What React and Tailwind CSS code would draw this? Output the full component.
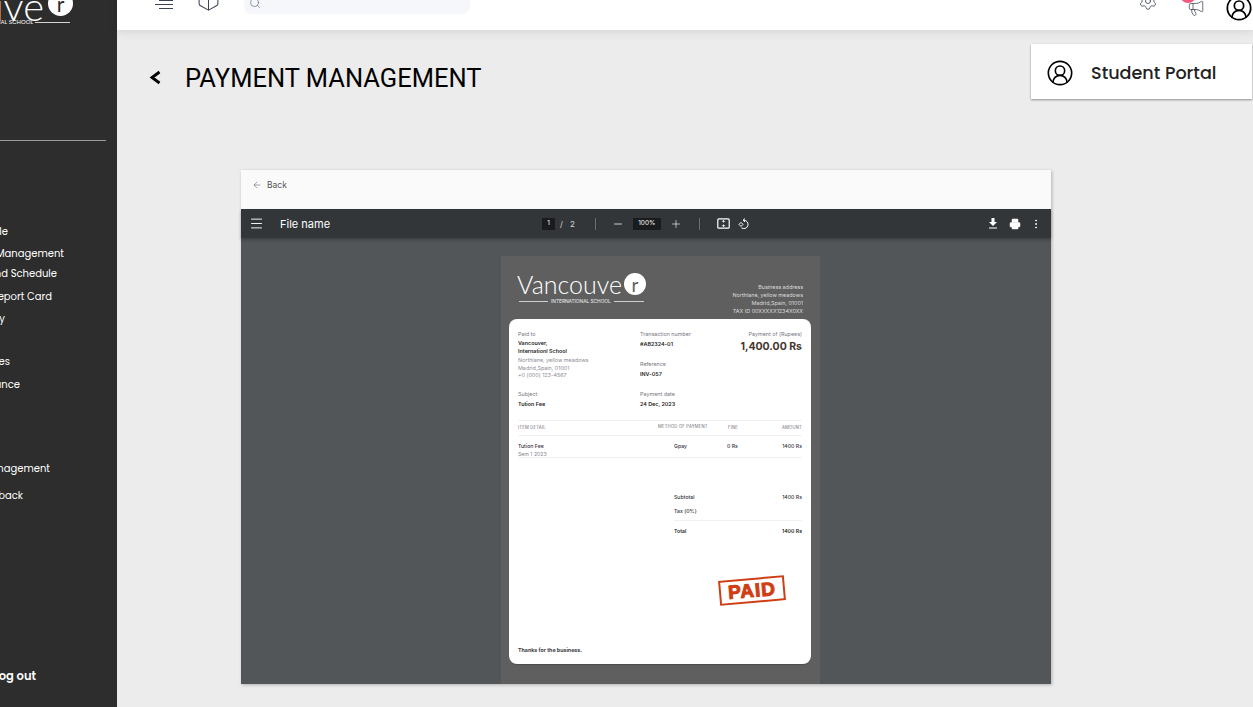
import React from 'react';
import { ArrowLeft, Box, CircleUserRound, Megaphone, Menu, Minus, MoreVertical, Plus, Printer, Search, Settings } from 'lucide-react';

const navItems = [
  { label: 'Profile', cls: 'w-[8px] mt-[83px]' },
  { label: 'Fee Management', cls: 'w-[64px] mt-[7px]' },
  { label: 'Time Table and Schedule', cls: 'w-[57px] mt-[5px]' },
  { label: 'Report Card', cls: 'w-[52px] mt-[8px]' },
  { label: 'Library', cls: 'w-[5px] mt-[7px]' },
  { label: 'Notices', cls: 'w-[10px] mt-[28px]' },
  { label: 'Attendance', cls: 'w-[20px] mt-[8px]' },
  { label: 'Management', cls: 'w-[50px] mt-[69px]' },
  { label: 'Feedback', cls: 'w-[23px] mt-[12px]' },
];

const Logo = () => (
  <div className="w-[130px]">
    <div className="flex items-center h-[24px]">
      <span className="font-['Lato'] font-light text-[25px] leading-none text-white">Vancouve</span>
      <span className="w-[22px] h-[22px] rounded-full bg-white flex items-center justify-center font-['Lato'] text-[19px] leading-none text-[#5f5f5f] ml-[2px]">r</span>
    </div>
    <div className="flex items-center gap-[3px] mt-[3px] pl-[2px]">
      <div className="h-px w-[29px] bg-white/70"></div>
      <span className="text-[4.8px] leading-none text-white/90 whitespace-nowrap">INTERNATIONAL SCHOOL</span>
      <div className="h-px w-[30px] bg-white/70"></div>
    </div>
  </div>
);

const Sidebar = () => (
  <aside className="w-[117px] h-[707px] shrink-0 bg-[#2d2d2d] overflow-hidden flex flex-col font-['Poppins','Open_Sans',sans-serif] text-white">
    <div className="h-[24px] flex justify-end items-start w-[73px] -mt-[7px] whitespace-nowrap">
      <span className="font-['Lato'] font-light text-[40px] leading-[26px] text-white">Vancouve</span>
      <span className="shrink-0 w-[25px] h-[25px] rounded-full bg-white flex items-center justify-center font-['Lato'] text-[21px] leading-none text-[#2d2d2d] mt-[-2px] ml-[4px]">r</span>
    </div>
    <div className="flex justify-end items-center w-[70px] gap-[2px] whitespace-nowrap mt-[2px] h-[6px]">
      <span className="text-[6px] leading-none">INTERNATIONAL SCHOOL</span>
      <div className="h-px w-[35px] shrink-0 bg-white/80"></div>
    </div>
    <div className="h-px w-[106px] bg-[#9a9a9a] mt-[115px]"></div>
    {navItems.map((item) => (
      <div key={item.label} className={`${item.cls} h-[15px] flex justify-end items-center whitespace-nowrap text-[10px] font-normal`}>
        {item.label}
      </div>
    ))}
    <div className="w-[36px] mt-[165px] flex justify-end whitespace-nowrap text-[11.5px] leading-[16px] font-semibold">Log out</div>
  </aside>
);

const TopBar = () => (
  <header className="h-[30px] shrink-0 bg-white overflow-hidden flex items-start pl-[38px] relative z-10 shadow-[0_2px_10px_rgba(0,0,0,0.1)]">
    <svg width="20" height="10" viewBox="0 0 20 10" className="text-[#3b4252]" fill="none" stroke="currentColor" strokeWidth="1">
      <path d="M4 0.5h14M0 4.5h18M4 8.5h14" />
    </svg>
    <Box size={25} strokeWidth={1} className="ml-[21px] -mt-[13px] text-[#3b4252]" />
    <div className="ml-[23px] w-[226px] h-[14px] bg-[#f5f7fa] rounded-b-[8px] pl-[5px]">
      <Search size={12} strokeWidth={1.25} className="-mt-[3px] text-[#5b6577]" />
    </div>
    <div className="flex-1"></div>
    <Settings size={20} strokeWidth={1} className="-mt-[9px] text-[#3b4252]" />
    <div className="relative ml-[29px] w-[18px] h-[14px]">
      <div className="absolute -left-[7px] -top-[13px] w-[16px] h-[16px] rounded-full bg-[#f4587e]"></div>
      <Megaphone size={18} strokeWidth={1} className="-mt-[1px] text-[#3b4252]" />
    </div>
    <CircleUserRound size={28} strokeWidth={1.5} className="ml-[20px] -mt-[6px] text-black" />
  </header>
);

const PdfToolbar = () => (
  <div className="h-[29px] bg-[#323639] flex items-center text-white relative z-10 shadow-[0_2px_3px_rgba(0,0,0,0.25)]">
    <Menu size={15} strokeWidth={1.5} className="ml-[8px]" />
    <span className="ml-[16px] w-[262px] text-[11px] font-['Inter'] pt-[1px]">File name</span>
    <span className="w-[13px] h-[12px] bg-[#191b1c] flex items-center justify-center text-[6.5px] font-['Inter']">1</span>
    <span className="ml-[5px] text-[8px] text-[#d5d5d5] font-['Inter']">/</span>
    <span className="ml-[7px] text-[8px] text-[#d5d5d5] font-['Inter']">2</span>
    <div className="ml-[20px] w-px h-[12px] bg-[#6a6e71]"></div>
    <Minus size={12} strokeWidth={1.5} className="ml-[16px]" />
    <span className="ml-[9px] w-[28px] h-[12px] bg-[#191b1c] flex items-center justify-center text-[6.5px] font-['Inter']">100%</span>
    <Plus size={12} strokeWidth={1.25} className="ml-[9px]" />
    <div className="ml-[17px] w-px h-[12px] bg-[#6a6e71]"></div>
    <svg width="13" height="11" viewBox="0 0 13 11" className="ml-[17px]" fill="none" stroke="currentColor" strokeWidth="1.2">
      <rect x="0.8" y="0.8" width="11.4" height="9.4" rx="1" />
      <path d="M6.5 2.5v2M6.5 6.5v2M5 3.8l1.5-1.5L8 3.8M5 7.2l1.5 1.5L8 7.2" strokeWidth="0.9" />
    </svg>
    <svg width="12" height="12" viewBox="0 0 12 12" className="ml-[8px]" fill="none" stroke="currentColor" strokeWidth="1">
      <path d="M6 2.2a4.2 4.2 0 1 1-2.6 7.6" />
      <path d="M7 0.6 5 2.2 7 3.9" />
      <path d="M3 4.4 5 6.4 3 8.4 1 6.4z" />
    </svg>
    <div className="flex-1"></div>
    <svg width="10" height="11" viewBox="0 0 10 11" fill="currentColor">
      <path d="M3.5 0h3v4h2.5L5 8 1 4h2.5zM1 9.5h8v1H1z" />
    </svg>
    <Printer size={12} fill="currentColor" strokeWidth={1} className="ml-[11px] text-white" />
    <MoreVertical size={12} strokeWidth={2} className="ml-[9px] mr-[9px]" />
  </div>
);

const Invoice = () => (
  <div className="ml-[260px] mt-[18px] w-[319px] h-[428px] bg-[#5f5f5f] flex flex-col px-[8px] font-['Inter']">
    <div className="flex justify-between h-[63px] pl-[8px] pr-[9px]">
      <div className="pt-[16px]"><Logo /></div>
      <div className="pt-[27px] text-right text-[5.4px] leading-[8px] text-[#dcdcdc]">
        <div>Business address</div>
        <div>Northlane, yellow meadows</div>
        <div>Madrid,Spain, 01001</div>
        <div>TAX ID 00XXXXX1234X0XX</div>
      </div>
    </div>
    <div className="w-[302px] h-[345px] bg-white rounded-[8px] px-[9px] pt-[11px] flex flex-col shadow-[0_1px_1px_rgba(0,0,0,0.2)]">
      <div className="flex h-[90px]">
        <div className="w-[122px] text-[5.4px] text-[#77777f]">
          <div className="leading-[8px]">Paid to</div>
          <div className="mt-[2px] font-semibold leading-[7.5px] text-[#1f1f24]">Vancouver,<br />Internationl School</div>
          <div className="mt-[2px] leading-[7.7px] text-[#8c8c94]">Northlane, yellow meadows<br />Madrid,Spain, 01001<br />+0 (000) 123-4567</div>
          <div className="mt-[10px] leading-[8px]">Subject</div>
          <div className="mt-[2px] font-semibold leading-[8px] text-[#1f1f24]">Tution Fee</div>
        </div>
        <div className="w-[70px] text-[5.4px] text-[#77777f]">
          <div className="leading-[8px]">Transaction number</div>
          <div className="mt-[2px] font-semibold leading-[8px] text-[#1f1f24]">#AB2324-01</div>
          <div className="mt-[12px] leading-[8px]">Reference</div>
          <div className="mt-[2px] font-semibold leading-[8px] text-[#1f1f24]">INV-057</div>
          <div className="mt-[12px] leading-[8px]">Payment date</div>
          <div className="mt-[2px] font-semibold leading-[8px] text-[#1f1f24]">24 Dec, 2023</div>
        </div>
        <div className="flex-1 text-right">
          <div className="text-[5.4px] leading-[8px] text-[#77777f]">Payment of (Rupees)</div>
          <div className="mt-[2px] text-[10.5px] leading-[14px] font-bold text-[#45352c] whitespace-nowrap">1,400.00 Rs</div>
        </div>
      </div>
      <div className="border-y border-[#eef0f2] h-[16px] flex items-center text-[4.2px] tracking-[0.2px] text-[#6f6f78]">
        <span className="w-[140px]">ITEM DETAIL</span>
        <span className="w-[70px] -mt-[2px]">METHOD OF PAYMENT</span>
        <span className="w-[40px]">FINE</span>
        <span className="flex-1 text-right">AMOUNT</span>
      </div>
      <div className="border-b border-[#eef0f2] h-[22px] pt-[6px] flex text-[5.2px] font-medium leading-[8px] text-[#33333a]">
        <div className="w-[156px]">
          Tution Fee
          <div className="font-normal text-[#85858d] leading-[9px]">Sem 1 2023</div>
        </div>
        <span className="w-[53px]">Gpay</span>
        <span className="w-[30px]">0 Rs</span>
        <span className="flex-1 text-right">1400 Rs</span>
      </div>
      <div className="ml-[156px] mt-[35px] text-[5.2px] leading-[8px] font-medium text-[#33333a]">
        <div className="flex justify-between"><span>Subtotal</span><span>1400 Rs</span></div>
        <div className="mt-[6px] pb-[5px] border-b border-[#eef0f2]">Tax (0%)</div>
        <div className="mt-[6px] flex justify-between font-semibold text-[#1f1f24]"><span>Total</span><span>1400 Rs</span></div>
      </div>
      <div className="self-end mt-[43px] mr-[17px] -rotate-[5deg] border-[2.5px] border-[#cf3d12] w-[66px] h-[25px] flex items-center justify-center font-['Liberation_Sans'] font-black text-[19px] leading-none tracking-[1px] text-[#cf3d12] [-webkit-text-stroke:1px_#cf3d12]">PAID</div>
      <div className="mt-[43px] text-[5.3px] leading-[8px] font-bold text-[#3c3c44]">Thanks for the business.</div>
    </div>
  </div>
);

export default function App() {
  return (
    <div className="w-[1253px] h-[707px] overflow-hidden flex bg-[#ececec]">
      <Sidebar />
      <main className="flex-1 flex flex-col min-w-0">
        <TopBar />
        <div className="flex justify-between pr-px mt-[14px] h-[55px]">
          <div className="flex items-center pl-[32px] pt-[12px] text-black">
            <svg width="12" height="15" viewBox="0 0 12 15" fill="none" stroke="currentColor" strokeWidth="2.8">
              <path d="M10.5 2 3 7.5l7.5 5.5" />
            </svg>
            <h1 className="ml-[24px] font-['Roboto'] text-[25.5px] leading-[30px] whitespace-nowrap">PAYMENT MANAGEMENT</h1>
          </div>
          <div className="w-[221px] bg-white shadow-[0_1px_2px_rgba(0,0,0,0.4)] flex items-center pl-[15px] pt-[3px] text-[#222]">
            <CircleUserRound size={28} strokeWidth={1.4} className="text-black" />
            <span className="ml-[17px] font-['Poppins','Open_Sans',sans-serif] text-[17.6px] font-medium">Student Portal</span>
          </div>
        </div>
        <section className="ml-[124px] mt-[71px] w-[810px] h-[514px] flex flex-col shadow-[1px_1px_3px_rgba(0,0,0,0.25)]">
          <div className="h-[39px] bg-[#fafafa] flex items-center pl-[11px] pb-[9px] text-[#555] font-['Inter']">
            <ArrowLeft size={10} strokeWidth={1.25} />
            <span className="ml-[5px] text-[8.5px]">Back</span>
          </div>
          <PdfToolbar />
          <div className="flex-1 bg-[#525659] overflow-hidden">
            <Invoice />
          </div>
        </section>
      </main>
    </div>
  );
}
